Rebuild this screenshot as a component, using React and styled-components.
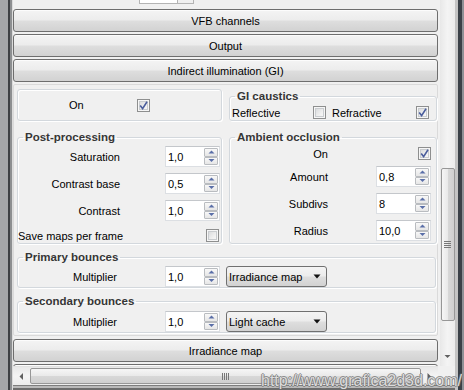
import styled, { createGlobalStyle } from "styled-components";

const GlobalStyle = createGlobalStyle`
  html, body { margin: 0; padding: 0; }
  body {
    font-family: "Liberation Sans", Arial, sans-serif;
    font-size: 11px;
    color: #000;
    background: #f0f0f0;
  }
`;

function App() {
  return (
    <Window>
      <GlobalStyle />
      <LeftFrame />
      <Middle>
        <MainRow>
          <Content>
            <TopArea>
              <StubBox>
                <StubSpin />
              </StubBox>
            </TopArea>
            <Rollout>VFB channels</Rollout>
            <Rollout>Output</Rollout>
            <Rollout>Indirect illumination (GI)</Rollout>
            <Panel>
              <TopRow>
                <OnBox>
                  <OnLabel>On</OnLabel>
                  <CheckBox checked />
                </OnBox>
                <Group $h={32}>
                  <Legend>GI caustics</Legend>
                  <CausticsRow>
                    <CausticsLabel>Reflective</CausticsLabel>
                    <CheckBox />
                    <CausticsLabel $grow>Refractive</CausticsLabel>
                    <CheckBox checked />
                  </CausticsRow>
                </Group>
              </TopRow>
              <MidRow>
                <Group $h={114}>
                  <Legend>Post-processing</Legend>
                  <FormGrid $label={102} $gap={45} $top={2}>
                    <Label>Saturation</Label>
                    <Spinner value="1,0" />
                    <Label>Contrast base</Label>
                    <Spinner value="0,5" />
                    <Label>Contrast</Label>
                    <Spinner value="1,0" />
                    <WideRow>
                      <span>Save maps per frame</span>
                      <CheckBox />
                    </WideRow>
                  </FormGrid>
                </Group>
                <Group $h={114}>
                  <Legend>Ambient occlusion</Legend>
                  <FormGrid $label={98} $gap={48} $top={3}>
                    <Label>On</Label>
                    <CheckCell>
                      <CheckBox checked />
                    </CheckCell>
                    <Label>Amount</Label>
                    <Spinner value="0,8" />
                    <Label>Subdivs</Label>
                    <Spinner value="8" />
                    <Label>Radius</Label>
                    <Spinner value="10,0" />
                  </FormGrid>
                </Group>
              </MidRow>
              <BounceGroup $h={38}>
                <Legend>Primary bounces</Legend>
                <BounceRow $top={2}>
                  <BounceLabel>Multiplier</BounceLabel>
                  <Spinner value="1,0" />
                  <Dropdown value="Irradiance map" />
                </BounceRow>
              </BounceGroup>
              <BounceGroup $h={39}>
                <Legend>Secondary bounces</Legend>
                <BounceRow $top={3}>
                  <BounceLabel>Multiplier</BounceLabel>
                  <Spinner value="1,0" />
                  <Dropdown value="Light cache" />
                </BounceRow>
              </BounceGroup>
            </Panel>
            <Rollout>Irradiance map</Rollout>
            <Rollout />
          </Content>
          <VScroll>
            <VThumb>
              <Grip $vertical />
            </VThumb>
            <VArrowZone>
              <Arrow dir="down" />
            </VArrowZone>
          </VScroll>
        </MainRow>
        <HScrollRow>
          <HScroll>
            <HArrowZone>
              <Arrow dir="left" />
            </HArrowZone>
            <HThumb>
              <Grip />
            </HThumb>
            <HArrowZone>
              <Arrow dir="right" />
            </HArrowZone>
          </HScroll>
          <Corner />
        </HScrollRow>
        <BottomFrame />
      </Middle>
      <RightFrame />
      <Watermark>http://www.grafica2d3d.com/</Watermark>
    </Window>
  );
}

function CheckBox({ checked }) {
  return (
    <Check>
      {checked && (
        <svg width="13" height="13" viewBox="0 0 13 13">
          <path
            d="M3.2 6.6 L5.6 9.6 L10 2.8"
            fill="none"
            stroke="#4a5d9c"
            strokeWidth="1.6"
          />
        </svg>
      )}
    </Check>
  );
}

function Spinner({ value }) {
  return (
    <SpinBox>
      <SpinValue>{value}</SpinValue>
      <SpinButtons>
        <SpinBtn>
          <svg width="7" height="5" viewBox="0 0 7 5">
            <path d="M3.5 0.5 L6.5 3.5 L0.5 3.5 Z" fill="#5a6fa8" />
          </svg>
        </SpinBtn>
        <SpinBtn>
          <svg width="7" height="5" viewBox="0 0 7 5">
            <path d="M0.5 1 L6.5 1 L3.5 4 Z" fill="#5a6fa8" />
          </svg>
        </SpinBtn>
      </SpinButtons>
    </SpinBox>
  );
}

function Dropdown({ value }) {
  return (
    <DropBox>
      <span>{value}</span>
      <svg width="8" height="5" viewBox="0 0 8 5">
        <path d="M0.5 0.5 L7.5 0.5 L4 4.5 Z" fill="#111" />
      </svg>
    </DropBox>
  );
}

function Arrow({ dir }) {
  const paths = {
    down: "M0.5 1 L6.5 1 L3.5 4 Z",
    left: "M4 0 L4 7 L0.5 3.5 Z",
    right: "M0.5 0 L0.5 7 L4 3.5 Z",
  };
  const size = dir === "down" ? [7, 5] : [5, 7];
  return (
    <svg width={size[0]} height={size[1]} viewBox={`0 0 ${size[0]} ${size[1]}`}>
      <path d={paths[dir]} fill="#606060" />
    </svg>
  );
}

export default App;

const Window = styled.div`
  position: relative;
  width: 464px;
  height: 390px;
  display: flex;
  overflow: hidden;
`;

const LeftFrame = styled.div`
  width: 13px;
  flex: none;
  background: linear-gradient(
    to right,
    #a4a6a8 0 8px,
    #3d4043 8px 10px,
    #8d8f91 10px 12px,
    #dcdcdc 12px 13px
  );
`;

const RightFrame = styled.div`
  width: 9px;
  flex: none;
  background: linear-gradient(
    to right,
    #c4c4c4 0 3px,
    #3b4148 3px 7px,
    #8e9196 7px 9px
  );
`;

const Middle = styled.div`
  width: 442px;
  display: flex;
  flex-direction: column;
`;

const MainRow = styled.div`
  height: 366px;
  display: flex;
  gap: 2px;
`;

const Content = styled.div`
  width: 425px;
  overflow: hidden;
  display: flex;
  flex-direction: column;
  gap: 2px;
`;

const TopArea = styled.div`
  height: 7px;
  flex: none;
`;

const StubBox = styled.div`
  margin-left: 126px;
  width: 55px;
  height: 4px;
  box-sizing: border-box;
  border: 1px solid #b4b4b4;
  border-top: none;
  background: #fff;
  display: flex;
  justify-content: flex-end;
`;

const StubSpin = styled.div`
  width: 15px;
  border-left: 1px solid #b4b4b4;
  background: #f0f0f0;
`;

const Rollout = styled.div`
  height: 23px;
  flex: none;
  box-sizing: border-box;
  border: 1px solid #6e6e6e;
  border-radius: 3px;
  background: linear-gradient(#f4f4f4 0%, #ececec 48%, #dedede 52%, #d2d2d2 100%);
  box-shadow: inset 0 1px 0 #fcfcfc;
  display: flex;
  align-items: center;
  justify-content: center;
`;

const Panel = styled.div`
  height: 252px;
  flex: none;
  box-sizing: border-box;
  border: 1px solid #dadada;
  border-radius: 2px;
  padding: 4px 1px 0 3px;
  margin-bottom: 1px;
  display: flex;
  flex-direction: column;
`;

const TopRow = styled.div`
  display: grid;
  grid-template-columns: 205px 208px;
  column-gap: 7px;
  height: 32px;
`;

const MidRow = styled.div`
  display: grid;
  grid-template-columns: 205px 208px;
  column-gap: 7px;
  margin-top: 9px;
`;

const boxBorder = `
  border: 1px solid #d3d8dd;
  border-radius: 3px;
  box-shadow: inset 1px 1px 0 #fff, 1px 1px 0 #fff;
`;

const OnBox = styled.div`
  ${boxBorder}
  box-sizing: border-box;
  height: 32px;
  display: flex;
  align-items: center;
  padding-left: 51px;
`;

const OnLabel = styled.span`
  width: 68px;
`;

const Group = styled.fieldset`
  ${boxBorder}
  margin: 0;
  padding: 0;
  min-width: 0;
  box-sizing: border-box;
  height: ${(p) => p.$h}px;
`;

const BounceGroup = styled(Group)`
  width: 419px;
  margin-top: 6px;
`;

const Legend = styled.legend`
  font-weight: bold;
  font-size: 11.5px;
  line-height: 14px;
  color: #363636;
  padding: 0 2px;
  margin-left: 5px;
`;

const CausticsRow = styled.div`
  display: flex;
  align-items: center;
  padding: 3px 7px 0 2px;
`;

const CausticsLabel = styled.span`
  width: ${(p) => (p.$grow ? "auto" : "81px")};
  flex: ${(p) => (p.$grow ? 1 : "none")};
  margin-left: ${(p) => (p.$grow ? "6px" : "0")};
`;

const FormGrid = styled.div`
  display: grid;
  grid-template-columns: ${(p) => p.$label}px 55px;
  column-gap: ${(p) => p.$gap}px;
  row-gap: 6px;
  align-items: center;
  padding-top: ${(p) => p.$top}px;
`;

const Label = styled.span`
  text-align: right;
`;

const CheckCell = styled.div`
  display: flex;
  justify-content: flex-end;
`;

const WideRow = styled.div`
  grid-column: 1 / -1;
  display: flex;
  align-items: center;
  justify-content: space-between;
  padding-right: 1px;
  margin-top: 2px;
`;

const BounceRow = styled.div`
  display: flex;
  align-items: center;
  padding-top: ${(p) => p.$top}px;
`;

const BounceLabel = styled.span`
  width: 99px;
  padding-right: 3px;
  margin-right: 45px;
  text-align: right;
`;

const Check = styled.span`
  width: 13px;
  height: 13px;
  flex: none;
  box-sizing: border-box;
  border: 1px solid #8e8f8f;
  background: linear-gradient(135deg, #d2d4d6 0%, #f0f0f0 60%, #fbfbfb 100%);
  box-shadow: inset 0 0 0 1px #f6f6f6, inset 0 0 0 2px #c9cccf;
  display: block;
  position: relative;

  svg {
    position: absolute;
    left: -1px;
    top: -1px;
  }
`;

const SpinBox = styled.div`
  width: 55px;
  height: 21px;
  box-sizing: border-box;
  border: 1px solid #dcdfe3;
  border-top-color: #c4c7cb;
  background: #fff;
  display: flex;
`;

const SpinValue = styled.span`
  flex: 1;
  padding-left: 2px;
  display: flex;
  align-items: center;
`;

const SpinButtons = styled.div`
  width: 15px;
  display: flex;
  flex-direction: column;
  padding: 1px 1px 1px 0;
  box-sizing: border-box;
`;

const SpinBtn = styled.div`
  flex: 1;
  border: 1px solid #b9bcc0;
  border-radius: 1px;
  background: linear-gradient(#f8f8f8, #e6e6e6);
  display: flex;
  align-items: center;
  justify-content: center;
`;

const DropBox = styled.div`
  width: 101px;
  height: 21px;
  margin-left: 6px;
  box-sizing: border-box;
  border: 1px solid #707070;
  border-radius: 3px;
  background: linear-gradient(#f4f4f4 0%, #ececec 48%, #dedede 52%, #d2d2d2 100%);
  display: flex;
  align-items: center;
  justify-content: space-between;
  padding: 0 5px 0 2px;
`;

const VScroll = styled.div`
  width: 15px;
  display: flex;
  flex-direction: column;
  align-items: center;
  padding-top: 168px;
  box-sizing: border-box;
  background: linear-gradient(to right, #e8e8e8, #f4f4f4 50%, #ececec);
`;

const VThumb = styled.div`
  width: 14px;
  height: 153px;
  box-sizing: border-box;
  border: 1px solid #979797;
  border-radius: 2px;
  background: linear-gradient(to right, #f6f6f6, #e9e9e9 50%, #d8d8d8 52%, #cfcfcf);
  display: flex;
  align-items: center;
  justify-content: center;
`;

const Grip = styled.div`
  width: ${(p) => (p.$vertical ? "7px" : "7px")};
  height: 7px;
  background: ${(p) =>
    p.$vertical
      ? "repeating-linear-gradient(#777 0 1px, transparent 1px 2px)"
      : "repeating-linear-gradient(to right, #777 0 1px, transparent 1px 2px)"};
`;

const VArrowZone = styled.div`
  flex: 1;
  display: flex;
  align-items: flex-end;
  justify-content: center;
  padding-bottom: 7px;
`;

const HScrollRow = styled.div`
  height: 19px;
  display: flex;
`;

const HScroll = styled.div`
  width: 425px;
  display: flex;
  align-items: center;
  border-top: 1px solid #e2e2e2;
  background: linear-gradient(#e8e8e8, #f4f4f4 50%, #ececec);
`;

const HArrowZone = styled.div`
  width: 17px;
  height: 100%;
  display: flex;
  align-items: center;
  justify-content: center;
`;

const HThumb = styled.div`
  flex: 1;
  height: 16px;
  box-sizing: border-box;
  border: 1px solid #979797;
  border-radius: 2px;
  background: linear-gradient(#f6f6f6, #e9e9e9 50%, #d8d8d8 52%, #cfcfcf);
  display: flex;
  align-items: center;
  justify-content: center;
`;

const Corner = styled.div`
  flex: 1;
  background: #f0f0f0;
`;

const BottomFrame = styled.div`
  height: 5px;
  background: linear-gradient(#7d7d7d 0 1px, #b9b9b9 1px 3px, #6c6c6c 3px);
`;

const Watermark = styled.div`
  position: absolute;
  right: 2px;
  bottom: 1px;
  font-family: "Liberation Sans", Arial, sans-serif;
  font-size: 16px;
  line-height: 17px;
  color: #dcdcdc;
  text-shadow: 1px 0 0 rgba(110, 110, 110, 0.7), -1px 0 0 rgba(110, 110, 110, 0.7),
    0 1px 0 rgba(110, 110, 110, 0.7), 0 -1px 0 rgba(110, 110, 110, 0.7);
`;
